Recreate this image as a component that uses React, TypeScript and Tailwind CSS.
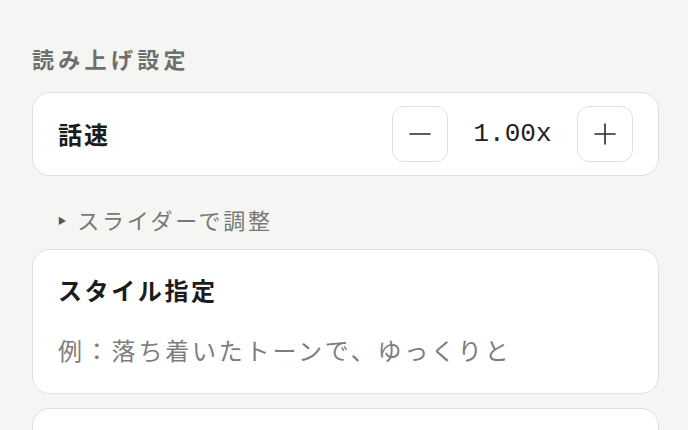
import React, { useState } from 'react';

const jp = "font-['Inter','Noto_Sans_CJK_JP',sans-serif]";

const StepButton: React.FC<{ kind: 'minus' | 'plus'; onClick: () => void }> = ({ kind, onClick }) => (
  <button
    onClick={onClick}
    className="w-[56px] h-[56px] rounded-[12px] border border-[#e0e0de] bg-white flex items-center justify-center text-[#2a2a2a]"
  >
    <svg width="22" height="22" viewBox="0 0 22 22" fill="none" stroke="currentColor" strokeWidth="1.6" strokeLinecap="round">
      <line x1="1" y1="11" x2="21" y2="11" />
      {kind === 'plus' && <line x1="11" y1="1" x2="11" y2="21" />}
    </svg>
  </button>
);

const App: React.FC = () => {
  const [rate, setRate] = useState(1);

  return (
    <div className={`min-h-screen bg-[#f5f5f3] pl-[32px] pr-[29px] pt-[44px] ${jp}`}>
      {/* Section title */}
      <h2 className="text-[22px] leading-[32px] font-bold tracking-[4.3px] text-[#6c706c]">読み上げ設定</h2>

      {/* Speed card */}
      <div className="mt-[16px] bg-white border border-[#dfdfdd] rounded-[18px] px-[25px] py-[13px] flex items-center">
        <span className="flex-1 pt-[4px] text-[24px] leading-[32px] font-bold tracking-[2px] text-[#1c1c1c]">話速</span>
        <StepButton kind="minus" onClick={() => setRate((r) => Math.max(0.5, r - 0.1))} />
        <span className="w-[129px] text-center font-['Liberation_Mono',monospace] text-[26px] leading-[32px] text-[#222]">
          {rate.toFixed(2)}x
        </span>
        <StepButton kind="plus" onClick={() => setRate((r) => Math.min(2, r + 0.1))} />
      </div>

      {/* Slider toggle */}
      <div className="mt-[29px] mb-[12px] pl-[26px] flex items-center h-[32px] text-[#777875]">
        <span className="text-[9px] mr-[11px] text-[#555]">▶</span>
        <span className="text-[22px] tracking-[2.7px]">スライダーで調整</span>
      </div>

      {/* Style card */}
      <div className="bg-white border border-[#dfdfdd] rounded-[18px] px-[25px] pt-[26px] pb-[25px]">
        <div className="text-[24px] leading-[32px] font-bold tracking-[2.6px] text-[#1c1c1c]">スタイル指定</div>
        <div className="mt-[28px] text-[24px] leading-[32px] tracking-[2.8px] text-[#7d7e7c]">
          例：落ち着いたトーンで、ゆっくりと
        </div>
      </div>

      {/* Next card (cut off) */}
      <div className="mt-[14px] h-[60px] bg-white border border-[#dfdfdd] rounded-[18px]" />
    </div>
  );
};

export default App;
